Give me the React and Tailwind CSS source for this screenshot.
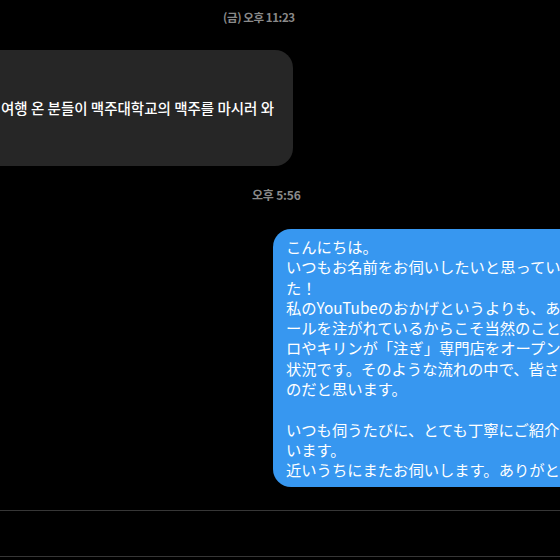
import React from "react";

const jpLines = [
  "こんにちは。",
  "いつもお名前をお伺いしたいと思っていまし",
  "た！",
  "私のYouTubeのおかげというよりも、あなた方が美味しいビ",
  "ールを注がれているからこそ当然のことです。アサヒやサッポ",
  "ロやキリンが「注ぎ」専門店をオープンしている",
  "状況です。そのような流れの中で、皆さんは先駆者な",
  "のだと思います。",
  "",
  "いつも伺うたびに、とても丁寧にご紹介いただき感謝して",
  "います。",
  "近いうちにまたお伺いします。ありがとうございました。",
];

const App = () => {
  return (
    <div className="w-[560px] h-[560px] bg-black overflow-hidden flex flex-col font-['Noto_Sans_CJK_KR','Noto_Sans_CJK_JP',sans-serif]">
      {/* first timestamp */}
      <div className="shrink-0 pt-[9px] pl-[223px] h-[25px] text-[11.5px] leading-[16px] tracking-[-0.4px] font-semibold text-[#8a8a8a] whitespace-nowrap">
        (금) 오후 11:23
      </div>

      {/* incoming bubble */}
      <div className="shrink-0 mt-[25px] -ml-[20px] w-[313px] h-[116px] rounded-[18px] bg-[#262626] flex items-center pl-[21px]">
        <span className="text-white text-[14.5px] font-medium whitespace-nowrap">
          여행 온 분들이 맥주대학교의 맥주를 마시러 와
        </span>
      </div>

      {/* second timestamp */}
      <div className="shrink-0 mt-[21px] pl-[252px] text-[12px] leading-[16px] tracking-[-0.2px] font-semibold text-[#8a8a8a] whitespace-nowrap">
        오후 5:56
      </div>

      {/* outgoing bubble */}
      <div className="shrink-0 mt-[26px] ml-[273px] w-[340px] rounded-[18px] bg-[#3797f0] pl-[13px] pt-[7px] pb-[7px] font-['Noto_Sans_CJK_JP',sans-serif]">
        {jpLines.map((line, i) => (
          <div key={i} className="text-white text-[15.3px] leading-[20.3px] h-[20.3px] whitespace-nowrap">
            {line}
          </div>
        ))}
      </div>

      {/* input area lines */}
      <div className="shrink-0 mt-[23px] border-t border-[#363636] h-[46px]"></div>
      <div className="shrink-0 border-t border-[#363636] h-[10px]"></div>
    </div>
  );
};

export default App;
